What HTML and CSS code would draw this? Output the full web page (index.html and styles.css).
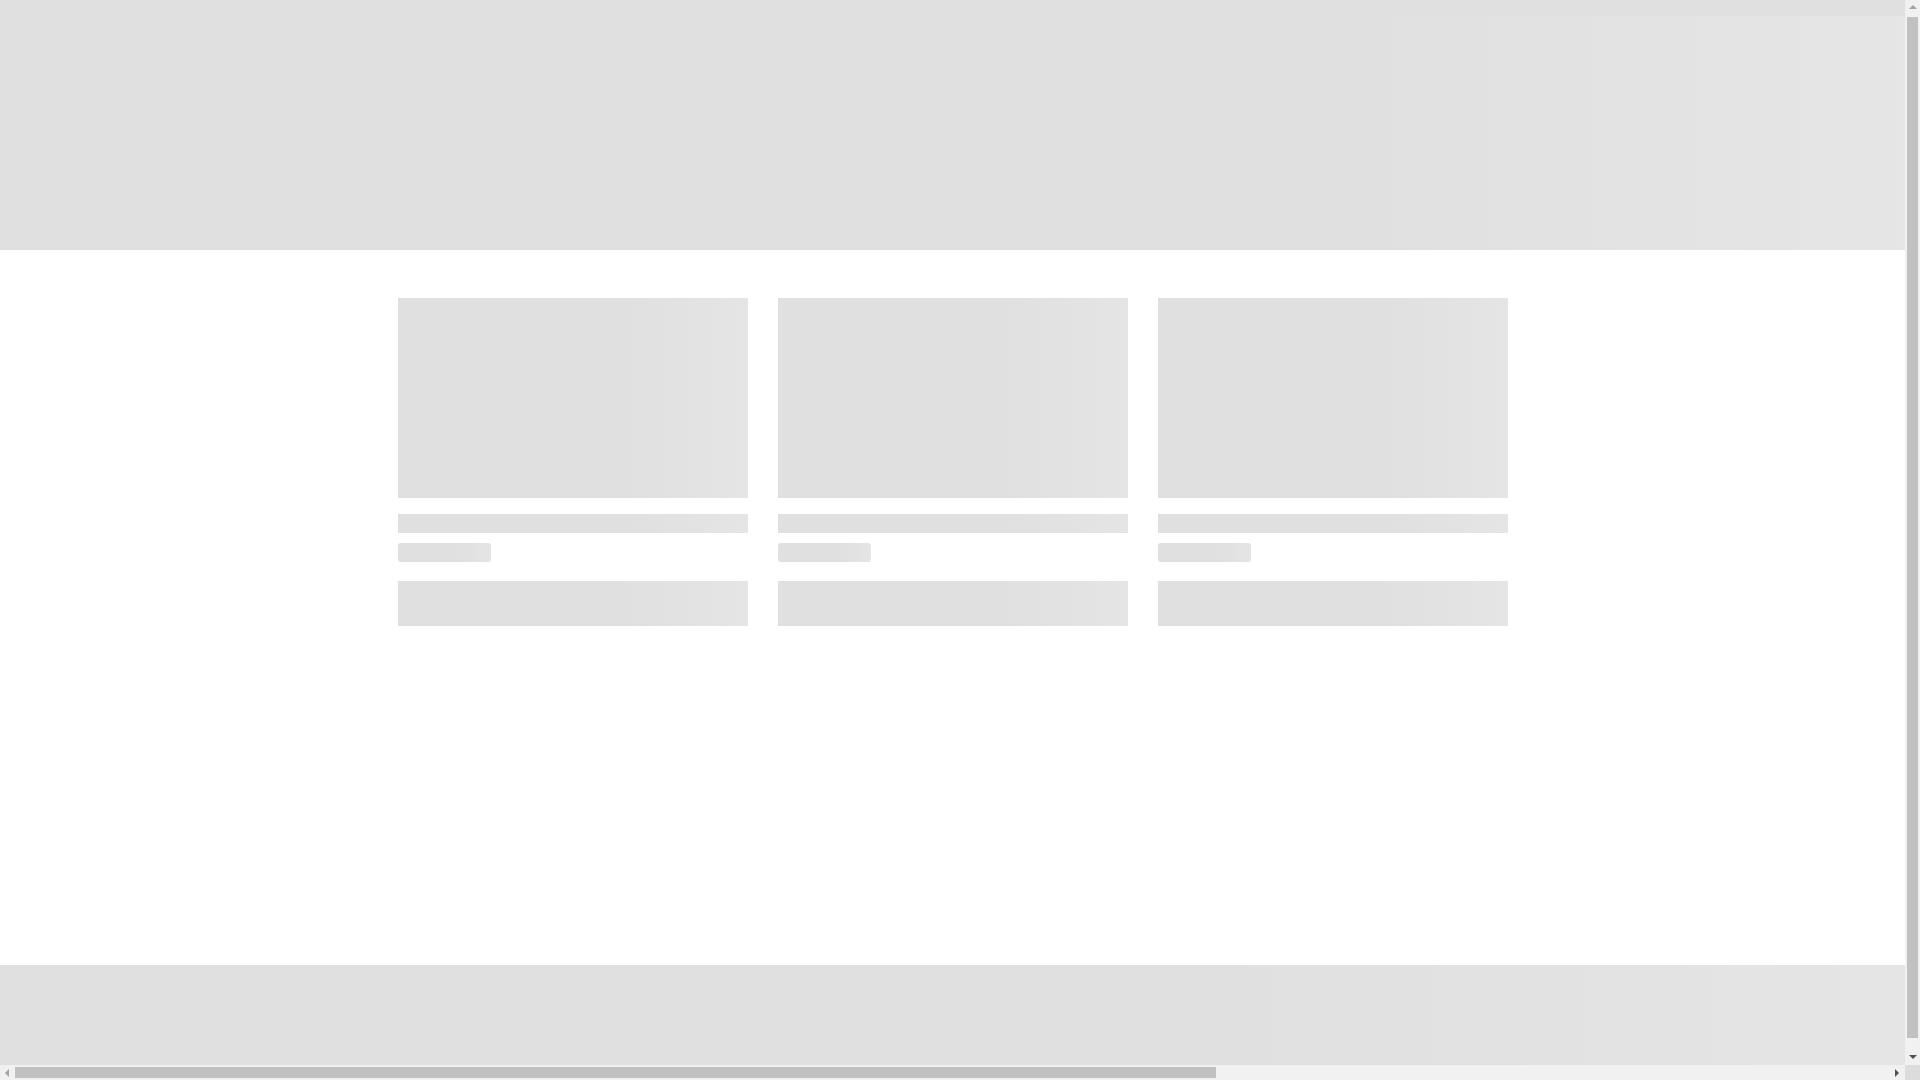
FILE: index.html
```html
<!DOCTYPE html>
<html lang="en">
<head>
<meta charset="utf-8">
<title>Loading</title>
<link rel="stylesheet" href="styles.css">
</head>
<body>
<div class="page">
  <header class="hero skeleton"></header>
  <main class="main">
    <div class="container">
      <div class="cards">
        <div class="card">
          <div class="card-image skeleton"></div>
          <div class="card-title skeleton"></div>
          <div class="card-sub skeleton"></div>
          <div class="card-button skeleton"></div>
        </div>
        <div class="card">
          <div class="card-image skeleton"></div>
          <div class="card-title skeleton"></div>
          <div class="card-sub skeleton"></div>
          <div class="card-button skeleton"></div>
        </div>
        <div class="card">
          <div class="card-image skeleton"></div>
          <div class="card-title skeleton"></div>
          <div class="card-sub skeleton"></div>
          <div class="card-button skeleton"></div>
        </div>
      </div>
    </div>
  </main>
  <footer class="footer skeleton"></footer>
</div>

<div class="scroll-v">
  <div class="arrow arrow-up"></div>
  <div class="thumb-v"></div>
  <div class="arrow arrow-down"></div>
</div>
<div class="scroll-h">
  <div class="arrow arrow-left"></div>
  <div class="thumb-h"></div>
  <div class="arrow arrow-right"></div>
</div>
<div class="scroll-corner"></div>
</body>
</html>
```

FILE: styles.css
```css
html, body {
  margin: 0;
  padding: 0;
  background: #ffffff;
  overflow: hidden;
  font-family: "Liberation Sans", Arial, sans-serif;
}

.page {
  width: calc(100vw - 15px);
  min-height: 100vh;
  display: flex;
  flex-direction: column;
}

.skeleton {
  background-color: #e0e0e0;
  background-image: linear-gradient(90deg, #e0e0e0 0%, #e0e0e0 62%, #e2e2e2 80%, #e5e5e5 100%);
}

.hero {
  position: relative;
  height: 250px;
  flex: none;
  background-image: none;
}

.hero::after {
  content: "";
  position: absolute;
  top: 16px;
  left: 0;
  right: 0;
  bottom: 0;
  background: linear-gradient(90deg, rgba(255,255,255,0) 0%, rgba(255,255,255,0) 70%, rgba(255,255,255,0.18) 100%);
}

.main {
  flex: 1;
  padding-top: 48px;
}

.container {
  max-width: 1140px;
  padding: 0 15px;
  margin: 0 auto;
  box-sizing: border-box;
}

.cards {
  display: grid;
  grid-template-columns: repeat(3, 350px);
  column-gap: 30px;
  justify-content: center;
}

.card {
  display: flex;
  flex-direction: column;
}

.card-image {
  height: 200px;
}

.card-title {
  height: 19px;
  margin-top: 16px;
}

.card-sub {
  width: 93px;
  height: 19px;
  margin-top: 10px;
  border-radius: 3px;
}

.card-button {
  height: 45px;
  margin-top: 19px;
}

.footer {
  height: 115px;
  flex: none;
}

/* scrollbars */
.scroll-v {
  position: fixed;
  top: 0;
  right: 0;
  width: 15px;
  height: 1065px;
  background: #f1f1f1;
  display: flex;
  flex-direction: column;
  align-items: center;
}

.thumb-v {
  width: 11px;
  margin-top: 2px;
  height: 1021px;
  background: #c1c1c1;
}

.scroll-h {
  position: fixed;
  left: 0;
  bottom: 0;
  width: 1905px;
  height: 15px;
  background: #f1f1f1;
  display: flex;
  align-items: center;
}

.thumb-h {
  height: 11px;
  width: 1201px;
  background: #c1c1c1;
}

.scroll-corner {
  position: fixed;
  right: 0;
  bottom: 0;
  width: 15px;
  height: 15px;
  background: #dcdcdc;
}

.arrow {
  width: 0;
  height: 0;
  flex: none;
}

.arrow-up {
  margin-top: 5px;
  border-left: 4px solid transparent;
  border-right: 4px solid transparent;
  border-bottom: 4px solid #a3a3a3;
  margin-bottom: 6px;
}

.arrow-down {
  margin-top: auto;
  margin-bottom: 6px;
  border-left: 4px solid transparent;
  border-right: 4px solid transparent;
  border-top: 4px solid #505050;
}

.arrow-left {
  margin-left: 5px;
  margin-right: 6px;
  border-top: 4px solid transparent;
  border-bottom: 4px solid transparent;
  border-right: 4px solid #a3a3a3;
}

.arrow-right {
  margin-left: auto;
  margin-right: 6px;
  border-top: 4px solid transparent;
  border-bottom: 4px solid transparent;
  border-left: 4px solid #505050;
}
```
